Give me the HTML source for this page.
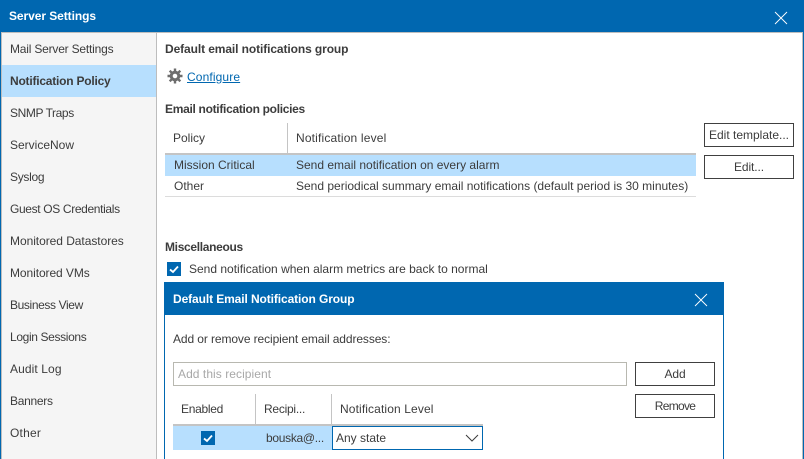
<!DOCTYPE html>
<html><head><meta charset="utf-8"><style>
html,body{margin:0;padding:0;width:804px;height:459px;overflow:hidden;background:#fff}
body{position:relative;font-family:"Liberation Sans",sans-serif;font-size:12px;color:#3c3c3c}
div{position:absolute;box-sizing:border-box}
.t{white-space:nowrap;line-height:16px;height:16px}
.b{font-weight:bold}
.btn{border:1px solid #404040;background:#fff;text-align:center;line-height:22px;white-space:nowrap}
.bl{background:#0067b0}
</style></head><body>
<div class="bl" style="left:0;top:0;width:804px;height:32px"></div>
<div class="t b" style="left:9px;top:8px;color:#fff;font-size:12px;letter-spacing:-.07px">Server Settings</div>
<svg style="position:absolute;left:774px;top:11px" width="14" height="14"><path d="M1 1L13 13M13 1L1 13" stroke="#fff" stroke-width=".9" fill="none"/></svg>
<div style="left:0;top:32px;width:1px;height:427px;background:#0067b0"></div>
<div style="left:1px;top:32px;width:803px;height:1px;background:#bdbdbd"></div>
<div style="left:1px;top:32px;width:1px;height:427px;background:#bdbdbd"></div>
<div style="left:802px;top:32px;width:1px;height:427px;background:#bdbdbd"></div>
<div style="left:803px;top:32px;width:1px;height:427px;background:#0067b0"></div>
<div style="left:2px;top:33px;width:154px;height:426px;background:#f5f5f5"></div>
<div style="left:156px;top:33px;width:1px;height:426px;background:#bdbdbd"></div>
<div style="left:2px;top:65px;width:154px;height:32px;background:#b7dffe"></div>
<div class="t" style="left:10px;top:41px;letter-spacing:-.2px">Mail Server Settings</div>
<div class="t b" style="left:10px;top:73px;letter-spacing:-.22px">Notification Policy</div>
<div class="t" style="left:10px;top:105px;letter-spacing:-.4px">SNMP Traps</div>
<div class="t" style="left:10px;top:137px">ServiceNow</div>
<div class="t" style="left:10px;top:169px;letter-spacing:-.3px">Syslog</div>
<div class="t" style="left:10px;top:201px;letter-spacing:-.35px">Guest OS Credentials</div>
<div class="t" style="left:10px;top:233px;letter-spacing:-.05px">Monitored Datastores</div>
<div class="t" style="left:10px;top:265px;letter-spacing:-.08px">Monitored VMs</div>
<div class="t" style="left:10px;top:297px;letter-spacing:-.38px">Business View</div>
<div class="t" style="left:10px;top:329px;letter-spacing:-.36px">Login Sessions</div>
<div class="t" style="left:10px;top:361px;letter-spacing:.1px">Audit Log</div>
<div class="t" style="left:10px;top:393px;letter-spacing:-.28px">Banners</div>
<div class="t" style="left:10px;top:425px;letter-spacing:.2px">Other</div>

<div class="t b" style="left:165px;top:41px;letter-spacing:-.1px">Default email notifications group</div>
<svg style="position:absolute;left:167px;top:68px" width="16" height="16" viewBox="0 0 16 16"><circle cx="8" cy="8" r="3.8" fill="none" stroke="#6e6e6e" stroke-width="3"/><path d="M8 0.5V3.5M8 12.5V15.5M0.5 8H3.5M12.5 8H15.5M2.7 2.7L4.8 4.8M11.2 11.2L13.3 13.3M13.3 2.7L11.2 4.8M4.8 11.2L2.7 13.3" stroke="#6e6e6e" stroke-width="2.4"/></svg>
<div class="t" style="left:187px;top:69px;color:#0067b0;text-decoration:underline;letter-spacing:.12px">Configure</div>
<div class="t b" style="left:165px;top:101px;letter-spacing:-.3px">Email notification policies</div>

<div class="t" style="left:173px;top:130px">Policy</div>
<div style="left:287px;top:123px;width:1px;height:30px;background:#c4c4c4"></div>
<div class="t" style="left:296px;top:130px;letter-spacing:.17px">Notification level</div>
<div style="left:165px;top:153px;width:531px;height:2px;background:#c4c4c4"></div>
<div style="left:165px;top:155px;width:531px;height:21px;background:#b7dffe"></div>
<div class="t" style="left:174px;top:157px">Mission Critical</div>
<div class="t" style="left:296px;top:157px">Send email notification on every alarm</div>
<div class="t" style="left:174px;top:178px">Other</div>
<div class="t" style="left:296px;top:178px">Send periodical summary email notifications (default period is 30 minutes)</div>
<div style="left:165px;top:196px;width:531px;height:1px;background:#dcdcdc"></div>
<div class="btn" style="left:704px;top:123px;width:90px;height:24px">Edit template...</div>
<div class="btn" style="left:704px;top:155px;width:90px;height:24px;letter-spacing:-.1px">Edit...</div>

<div class="t b" style="left:165px;top:239px;letter-spacing:-.32px">Miscellaneous</div>
<div class="bl" style="left:167px;top:262px;width:14px;height:14px"></div>
<svg style="position:absolute;left:167px;top:262px" width="14" height="14"><path d="M3 7.5L6 10L11 4.5" stroke="#fff" stroke-width="1.8" fill="none"/></svg>
<div class="t" style="left:189px;top:261px">Send notification when alarm metrics are back to normal</div>

<div style="left:164px;top:282px;width:560px;height:177px;background:#fff;border:1px solid #0067b0;border-bottom:0"></div>
<div class="bl" style="left:164px;top:282px;width:560px;height:33px"></div>
<div class="t b" style="left:173px;top:291px;color:#fff;letter-spacing:-.1px">Default Email Notification Group</div>
<svg style="position:absolute;left:694px;top:293px" width="14" height="14"><path d="M1 1L13 13M13 1L1 13" stroke="#fff" stroke-width=".9" fill="none"/></svg>
<div class="t" style="left:173px;top:331px;letter-spacing:-.1px">Add or remove recipient email addresses:</div>
<div style="left:173px;top:362px;width:454px;height:24px;border:1px solid #b8b8b0"></div>
<div class="t" style="left:178px;top:366px;color:#a8a8a8;letter-spacing:.06px">Add this recipient</div>
<div class="btn" style="left:635px;top:362px;width:80px;height:24px;letter-spacing:-.1px">Add</div>
<div class="btn" style="left:635px;top:394px;width:80px;height:24px;letter-spacing:-.7px">Remove</div>
<div class="t" style="left:181px;top:401px;letter-spacing:-.3px">Enabled</div>
<div style="left:255px;top:394px;width:1px;height:30px;background:#c4c4c4"></div>
<div class="t" style="left:264px;top:401px;letter-spacing:-.25px">Recipi...</div>
<div style="left:331px;top:394px;width:1px;height:30px;background:#c4c4c4"></div>
<div class="t" style="left:340px;top:401px;letter-spacing:.12px">Notification Level</div>
<div style="left:173px;top:424px;width:310px;height:2px;background:#c4c4c4"></div>
<div style="left:173px;top:426px;width:310px;height:24px;background:#b7dffe"></div>
<div class="bl" style="left:201px;top:431px;width:14px;height:14px"></div>
<svg style="position:absolute;left:201px;top:431px" width="14" height="14"><path d="M3 7.5L6 10L11 4.5" stroke="#fff" stroke-width="1.8" fill="none"/></svg>
<div class="t" style="left:266px;top:430px;letter-spacing:-.3px">bouska@...</div>
<div style="left:332px;top:426px;width:151px;height:24px;background:#fff;border:1px solid #0067b0"></div>
<div class="t" style="left:336px;top:430px">Any state</div>
<svg style="position:absolute;left:465px;top:434px" width="14" height="8"><path d="M1 1L7 7L13 1" stroke="#3c3c3c" stroke-width="1" fill="none"/></svg>
</body></html>
